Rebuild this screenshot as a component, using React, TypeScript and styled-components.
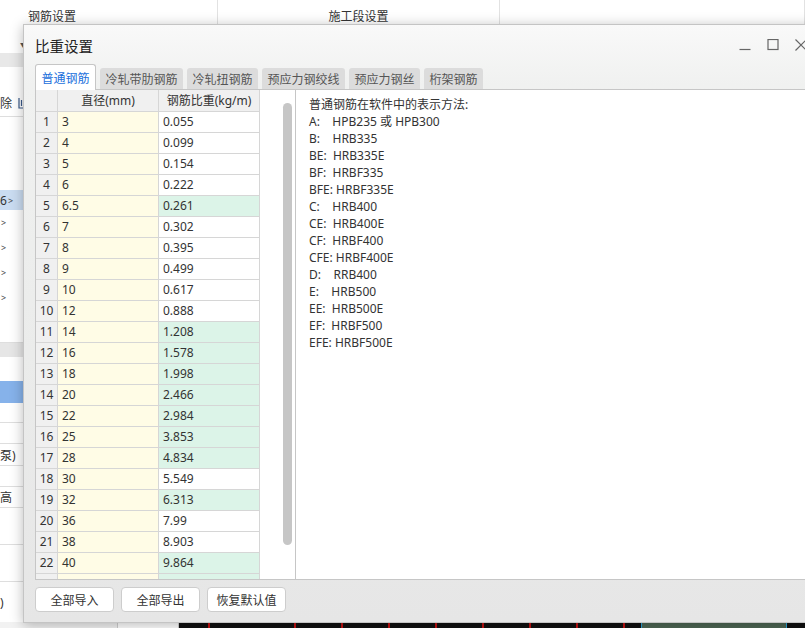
import React from "react";
import styled, { createGlobalStyle } from "styled-components";

const GlobalStyle = createGlobalStyle`
  html, body {
    margin: 0;
    padding: 0;
  }
  body {
    width: 805px;
    height: 628px;
    overflow: hidden;
    background: #fff;
    font-family: "Noto Sans", "Noto Sans CJK SC", sans-serif;
    color: #333;
  }
`;

/* ---------- background app ---------- */

const Desk = styled.div`
  position: relative;
  width: 805px;
  height: 628px;
  display: flex;
  flex-direction: column;
  overflow: hidden;
`;

const TopBar = styled.div`
  height: 32px;
  display: flex;
  flex-shrink: 0;
  background: #fff;
`;

const TopCell = styled.div<{ $w?: number; $center?: boolean }>`
  width: ${(p) => (p.$w ? `${p.$w}px` : "auto")};
  flex: ${(p) => (p.$w ? "none" : 1)};
  box-sizing: border-box;
  padding-left: ${(p) => (p.$center ? 0 : 28)}px;
  padding-top: 7px;
  text-align: ${(p) => (p.$center ? "center" : "left")};
  font-size: 12px;
  border-right: 1px solid #e2e2e2;
`;

const Main = styled.div`
  flex: 1;
  display: flex;
`;

const SidePanel = styled.div`
  width: 218px;
  display: flex;
  flex-direction: column;
  border-right: 1px solid #ddd;
`;

const SideRow = styled.div<{ $h: number; $bg?: string; $line?: boolean }>`
  height: ${(p) => p.$h}px;
  flex-shrink: 0;
  box-sizing: border-box;
  background: ${(p) => p.$bg || "#fff"};
  border-bottom: ${(p) => (p.$line ? "1px solid #dedede" : "none")};
  display: flex;
  align-items: center;
  font-size: 12px;
  white-space: nowrap;
`;

const Caret = styled.span`
  margin-left: 20px;
  margin-top: 4px;
  font-size: 6px;
  color: #555;
`;

const Chevron = styled.span`
  margin-left: 1px;
  font-size: 9px;
  color: #444;
`;

const SideText = styled.span<{ $offset?: number }>`
  margin-left: ${(p) => p.$offset ?? 0}px;
`;

const BottomStrip = styled.div`
  height: 6px;
  flex-shrink: 0;
  display: flex;
`;

const StripCell = styled.div<{ $w: number; $bg: string }>`
  width: ${(p) => p.$w}px;
  background: ${(p) => p.$bg};
  border-right: 1px solid #cfcfcf;
`;

const Ticks = styled.div`
  flex: 1;
  background-color: #111;
  background-image: repeating-linear-gradient(
    90deg,
    #111 0 45px,
    #c21212 45px 47px
  );
  background-position: 70px 0;
`;

const Clips = styled.div`
  width: 144px;
  background: #4d6653;
  border-left: 1px solid #29a3d6;
  border-right: 1px solid #29a3d6;
`;

const Tail = styled.div`
  width: 18px;
  background: #111;
`;

/* ---------- dialog ---------- */

const Dialog = styled.div`
  position: absolute;
  left: 23px;
  top: 24px;
  width: 800px;
  height: 599px;
  box-sizing: border-box;
  border: 1px solid #c4c4c4;
  background: linear-gradient(
    180deg,
    #f9f9f9 0%,
    #f0f1f0 10%,
    #ebeceb 55%,
    #e6e6e6 100%
  );
  box-shadow: 0 2px 12px rgba(0, 0, 0, 0.28);
  display: flex;
  flex-direction: column;
  padding: 0 11px;
`;

const TitleBar = styled.div`
  height: 39px;
  display: flex;
  align-items: center;
  flex-shrink: 0;
`;

const Title = styled.div`
  font-size: 14.5px;
  color: #222;
  flex: 1;
  padding-top: 1px;
`;

const Controls = styled.div`
  display: flex;
  align-items: center;
  margin-right: -4px;
`;

const CtrlButton = styled.div`
  width: 28px;
  height: 28px;
  display: flex;
  align-items: center;
  justify-content: center;
`;

const TabBar = styled.div`
  height: 25px;
  display: flex;
  align-items: flex-end;
  gap: 4px;
  flex-shrink: 0;
`;

const Tab = styled.div<{ $active?: boolean }>`
  position: relative;
  z-index: ${(p) => (p.$active ? 2 : 1)};
  box-sizing: border-box;
  height: ${(p) => (p.$active ? 26 : 21)}px;
  margin-bottom: ${(p) => (p.$active ? -1 : 0)}px;
  padding: 0 5.5px;
  display: flex;
  align-items: center;
  font-size: 12px;
  border-radius: 3px 3px 0 0;
  background: ${(p) => (p.$active ? "#fff" : "#dcdcdc")};
  color: ${(p) => (p.$active ? "#1a6fdc" : "#555")};
  border: ${(p) => (p.$active ? "1px solid #c6c6c6" : "none")};
  border-bottom: none;
  padding-top: ${(p) => (p.$active ? 0 : 1)}px;
`;

const Panel = styled.div`
  height: 491px;
  flex-shrink: 0;
  box-sizing: border-box;
  border: 1px solid #c6c6c6;
  display: flex;
  background: #fff;
`;

const GridPane = styled.div`
  display: flex;
  border-right: 1px solid #c6c6c6;
`;

const TableView = styled.div`
  width: 224px;
  height: 100%;
  overflow: hidden;
`;

const Grid = styled.div`
  display: grid;
  grid-template-columns: 22px 101px 101px;
`;

const Cell = styled.div<{ $bg?: string; $center?: boolean; $head?: boolean }>`
  height: ${(p) => (p.$head ? 22 : 21)}px;
  box-sizing: border-box;
  border-right: 1px solid #d6d6d6;
  border-bottom: 1px solid #d6d6d6;
  background: ${(p) => p.$bg || "#fff"};
  font-size: 12px;
  line-height: ${(p) => (p.$head ? 21 : 20)}px;
  padding-left: ${(p) => (p.$center ? 0 : 4)}px;
  text-align: ${(p) => (p.$center ? "center" : "left")};
  color: #333;
  white-space: nowrap;
`;

const ScrollGutter = styled.div`
  width: 35px;
  display: flex;
  justify-content: flex-end;
  padding-right: 3px;
  box-sizing: border-box;
`;

const Thumb = styled.div`
  width: 9px;
  height: 442px;
  margin-top: 13px;
  border-radius: 5px;
  background: #c6c6c6;
`;

const Notes = styled.div`
  flex: 1;
  padding: 6px 13px;
  font-size: 12px;
  line-height: 17px;
  color: #333;
`;

const NoteLine = styled.div`
  white-space: pre;
`;

const ButtonRow = styled.div`
  display: flex;
  gap: 7px;
  margin-top: 7px;
`;

const Button = styled.div`
  width: 79px;
  height: 25px;
  box-sizing: border-box;
  border: 1px solid #cdcdcd;
  border-radius: 4px;
  background: #fff;
  font-size: 12px;
  display: flex;
  align-items: center;
  justify-content: center;
  color: #333;
`;

const YELLOW = "#fffce6";
const GREEN = "#dcf4e8";
const GREY = "#f0f0f0";

const rows: [string, string, boolean][] = [
  ["3", "0.055", false],
  ["4", "0.099", false],
  ["5", "0.154", false],
  ["6", "0.222", false],
  ["6.5", "0.261", true],
  ["7", "0.302", false],
  ["8", "0.395", false],
  ["9", "0.499", false],
  ["10", "0.617", false],
  ["12", "0.888", false],
  ["14", "1.208", true],
  ["16", "1.578", true],
  ["18", "1.998", true],
  ["20", "2.466", true],
  ["22", "2.984", true],
  ["25", "3.853", true],
  ["28", "4.834", true],
  ["30", "5.549", false],
  ["32", "6.313", true],
  ["36", "7.99", false],
  ["38", "8.903", false],
  ["40", "9.864", true],
];

const notes = [
  "普通钢筋在软件中的表示方法:",
  "A:    HPB235 或 HPB300",
  "B:    HRB335",
  "BE:  HRB335E",
  "BF:  HRBF335",
  "BFE: HRBF335E",
  "C:    HRB400",
  "CE:  HRB400E",
  "CF:  HRBF400",
  "CFE: HRBF400E",
  "D:    RRB400",
  "E:    HRB500",
  "EE:  HRB500E",
  "EF:  HRBF500",
  "EFE: HRBF500E",
];

const tabs = [
  "普通钢筋",
  "冷轧带肋钢筋",
  "冷轧扭钢筋",
  "预应力钢绞线",
  "预应力钢丝",
  "桁架钢筋",
];

const Background = () => (
  <>
    <TopBar>
      <TopCell $w={218}>钢筋设置</TopCell>
      <TopCell $w={282} $center>
        施工段设置
      </TopCell>
      <TopCell />
    </TopBar>
    <Main>
      <SidePanel>
        <SideRow $h={21}>
          <Caret>▼</Caret>
        </SideRow>
        <SideRow $h={14} $bg="#e8e8e8" />
        <SideRow $h={23} />
        <SideRow $h={27} $line>
          <SideText>除</SideText>
          <svg width="8" height="12" viewBox="0 0 8 12" style={{ marginLeft: 6 }}>
            <path d="M1 1v10h6M3.5 3v6" stroke="#3a5a8a" strokeWidth="1.2" fill="none" />
          </svg>
        </SideRow>
        <SideRow $h={73} />
        <SideRow $h={20} $bg="#cadcf1">
          <SideText>6</SideText>
          <Chevron>&gt;</Chevron>
        </SideRow>
        {[0, 1, 2, 3].map((i) => (
          <SideRow key={i} $h={25}>
            <Chevron>&gt;</Chevron>
          </SideRow>
        ))}
        <SideRow $h={33} $line />
        <SideRow $h={14} $bg="#e6e6e6" />
        <SideRow $h={24} />
        <SideRow $h={22} $bg="#86b2ea" />
        <SideRow $h={20} $line />
        <SideRow $h={21} $line />
        <SideRow $h={22} $line>
          <SideText>泵)</SideText>
        </SideRow>
        <SideRow $h={21} $line />
        <SideRow $h={21} $line>
          <SideText>高</SideText>
        </SideRow>
        <SideRow $h={37} $line />
        <SideRow $h={37} $line />
        <SideRow $h={40}>
          <SideText>)</SideText>
        </SideRow>
      </SidePanel>
    </Main>
    <BottomStrip>
      <StripCell $w={117} $bg="#f2f2f2" />
      <StripCell $w={60} $bg="#fff" />
      <Ticks />
      <Clips />
      <Tail />
    </BottomStrip>
  </>
);

const App = () => {
  return (
    <Desk>
      <GlobalStyle />
      <Background />
      <Dialog>
        <TitleBar>
          <Title>比重设置</Title>
          <Controls>
            <CtrlButton>
              <svg width="12" height="12" viewBox="0 0 12 12">
                <path d="M0.5 10.5h11" stroke="#666" strokeWidth="1.2" />
              </svg>
            </CtrlButton>
            <CtrlButton>
              <svg width="12" height="12" viewBox="0 0 12 12">
                <rect x="1" y="0.5" width="10" height="10" stroke="#666" strokeWidth="1.2" fill="none" />
              </svg>
            </CtrlButton>
            <CtrlButton>
              <svg width="12" height="12" viewBox="0 0 12 12">
                <path d="M0.5 0.5l11 11M11.5 0.5l-11 11" stroke="#666" strokeWidth="1.2" />
              </svg>
            </CtrlButton>
          </Controls>
        </TitleBar>
        <TabBar>
          {tabs.map((t, i) => (
            <Tab key={t} $active={i === 0}>
              {t}
            </Tab>
          ))}
        </TabBar>
        <Panel>
          <GridPane>
            <TableView>
              <Grid>
                <Cell $bg={GREY} $center $head />
                <Cell $bg={GREY} $center $head>
                  直径(mm)
                </Cell>
                <Cell $bg={GREY} $center $head>
                  钢筋比重(kg/m)
                </Cell>
                {rows.map(([d, w, g], i) => (
                  <React.Fragment key={i}>
                    <Cell $bg={GREY} $center>
                      {i + 1}
                    </Cell>
                    <Cell $bg={YELLOW}>{d}</Cell>
                    <Cell $bg={g ? GREEN : "#fff"}>{w}</Cell>
                  </React.Fragment>
                ))}
                <Cell $bg={GREY} />
                <Cell $bg={YELLOW} />
                <Cell $bg={GREEN} />
              </Grid>
            </TableView>
            <ScrollGutter>
              <Thumb />
            </ScrollGutter>
          </GridPane>
          <Notes>
            {notes.map((n) => (
              <NoteLine key={n}>{n}</NoteLine>
            ))}
          </Notes>
        </Panel>
        <ButtonRow>
          <Button>全部导入</Button>
          <Button>全部导出</Button>
          <Button>恢复默认值</Button>
        </ButtonRow>
      </Dialog>
    </Desk>
  );
};

export default App;
